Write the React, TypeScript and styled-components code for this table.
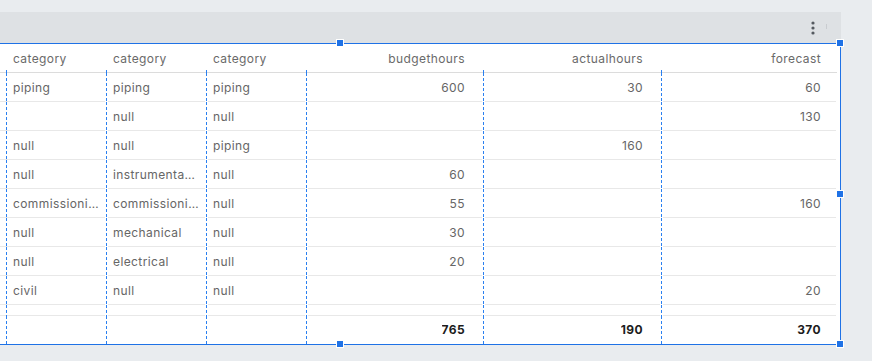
import { Fragment } from 'react';
import styled, { createGlobalStyle, css } from 'styled-components';

const GlobalStyle = createGlobalStyle`
  html, body {
    margin: 0;
    padding: 0;
    background: #e9ecef;
  }
  body {
    font-family: Inter, "Open Sans", sans-serif;
  }
`;

const BLUE = '#1f72e6';
const DASH = '#2a80f0';
const ROW_LINE = '#e8e8e8';

interface ICell {
  align?: 'left' | 'right';
  padRight?: number;
  divider?: boolean;
}

const columns = '6px 100px 100px 100px 177px 178px 176px';

const Page = styled.div`
  padding-top: 12px;
  height: 361px;
  box-sizing: border-box;
`;

const Panel = styled.section`
  width: 841px;
`;

const TitleBar = styled.div`
  display: flex;
  justify-content: flex-end;
  align-items: center;
  gap: 7px;
  height: 31px;
  padding-right: 14px;
  background: #dee1e4;
  box-sizing: border-box;
`;

const Kebab = styled.button`
  display: flex;
  align-items: center;
  justify-content: center;
  width: 12px;
  height: 16px;
  padding: 0;
  border: none;
  background: transparent;
  color: #555a60;
`;

const Grip = styled.span`
  width: 1px;
  height: 5px;
  margin-top: -3px;
  background: #c9ccd0;
`;

const Body = styled.div`
  position: relative;
  width: 840px;
  border-top: 1px solid ${BLUE};
  border-right: 1px solid ${BLUE};
  border-bottom: 1px solid ${BLUE};
  background: #ffffff;
`;

const Handle = styled.span`
  position: absolute;
  width: 6px;
  height: 6px;
  background: ${BLUE};
  border: 1px solid #ffffff;
  transform: translate(-50%, -50%);
  z-index: 3;
`;

const Grid = styled.div`
  display: grid;
  grid-template-columns: ${columns};
  font-size: 12px;
  letter-spacing: 0.4px;
`;

const dashed = css`
  background-image: linear-gradient(to bottom, ${DASH} 0 3px, transparent 3px 5px);
  background-size: 1px 5px;
  background-repeat: repeat-y;
`;

const HeadCell = styled.div<ICell>`
  position: relative;
  display: flex;
  align-items: center;
  justify-content: ${(p) => (p.align === 'right' ? 'flex-end' : 'flex-start')};
  height: 29px;
  padding: 0 ${(p) => p.padRight ?? 7}px 0 7px;
  box-sizing: border-box;
  border-bottom: 1px solid #dcdcdc;
  color: #6a6a6a;
  white-space: nowrap;

  &::before {
    content: ${(p) => (p.divider ? "''" : 'none')};
    position: absolute;
    left: 0;
    bottom: -1px;
    width: 1px;
    height: 3px;
    background: ${DASH};
  }
`;

const Cell = styled.div<ICell & { h?: number; bold?: boolean; line?: boolean }>`
  position: relative;
  display: flex;
  align-items: center;
  justify-content: ${(p) => (p.align === 'right' ? 'flex-end' : 'flex-start')};
  height: ${(p) => p.h ?? 29}px;
  padding: 0 ${(p) => p.padRight ?? 7}px 1px 7px;
  box-sizing: border-box;
  color: ${(p) => (p.bold ? '#1c1c1c' : '#666666')};
  font-weight: ${(p) => (p.bold ? 700 : 400)};
  min-width: 0;

  &::before {
    content: ${(p) => (p.divider ? "''" : 'none')};
    position: absolute;
    left: 0;
    top: 0;
    bottom: 0;
    width: 1px;
    ${dashed}
  }

  &::after {
    content: ${(p) => (p.line === false ? 'none' : "''")};
    position: absolute;
    left: ${(p) => (p.divider ? 2 : 0)}px;
    right: 1px;
    bottom: 0;
    height: 1px;
    background: ${ROW_LINE};
  }
`;

const Text = styled.span`
  overflow: hidden;
  text-overflow: ellipsis;
  white-space: nowrap;
`;

type Row = [string, string, string, string, string, string];

const rows: Row[] = [
  ['piping', 'piping', 'piping', '600', '30', '60'],
  ['', 'null', 'null', '', '', '130'],
  ['null', 'null', 'piping', '', '160', ''],
  ['null', 'instrumentation', 'null', '60', '', ''],
  ['commissioning', 'commissioning', 'null', '55', '', '160'],
  ['null', 'mechanical', 'null', '30', '', ''],
  ['null', 'electrical', 'null', '20', '', ''],
  ['civil', 'null', 'null', '', '', '20'],
];

const headers = ['category', 'category', 'category', 'budgethours', 'actualhours', 'forecast'];
const totals = ['', '', '', '765', '190', '370'];
const pads = [7, 7, 7, 18, 18, 16];

const colProps = (i: number): ICell => ({
  align: i >= 3 ? 'right' : 'left',
  padRight: pads[i],
  divider: true,
});

const KebabIcon = () => (
  <svg width="4" height="14" viewBox="0 0 4 14" fill="currentColor">
    <circle cx="2" cy="2" r="1.6" />
    <circle cx="2" cy="7" r="1.6" />
    <circle cx="2" cy="12" r="1.6" />
  </svg>
);

const App = () => {
  return (
    <>
      <GlobalStyle />
      <Page>
        <Panel>
          <TitleBar>
            <Kebab aria-label="more">
              <KebabIcon />
            </Kebab>
            <Grip />
          </TitleBar>
          <Body>
            <Handle style={{ left: 340, top: -1 }} />
            <Handle style={{ left: 840, top: -1 }} />
            <Handle style={{ left: 840, top: 150 }} />
            <Handle style={{ left: 340, top: 300 }} />
            <Handle style={{ left: 840, top: 300 }} />
            <Grid>
              <HeadCell />
              {headers.map((h, i) => (
                <HeadCell key={`h${i}`} {...colProps(i)}>
                  {h}
                </HeadCell>
              ))}

              {rows.map((row, r) => (
                <Fragment key={`r${r}`}>
                  <Cell />
                  {row.map((v, i) => (
                    <Cell key={`c${i}`} {...colProps(i)}>
                      <Text>{v}</Text>
                    </Cell>
                  ))}
                </Fragment>
              ))}

              <Cell h={11} />
              {headers.map((_, i) => (
                <Cell key={`s${i}`} h={11} {...colProps(i)} />
              ))}

              <Cell h={28} line={false} />
              {totals.map((v, i) => (
                <Cell key={`t${i}`} h={28} bold line={false} {...colProps(i)}>
                  <Text>{v}</Text>
                </Cell>
              ))}
            </Grid>
          </Body>
        </Panel>
      </Page>
    </>
  );
};

export default App;
